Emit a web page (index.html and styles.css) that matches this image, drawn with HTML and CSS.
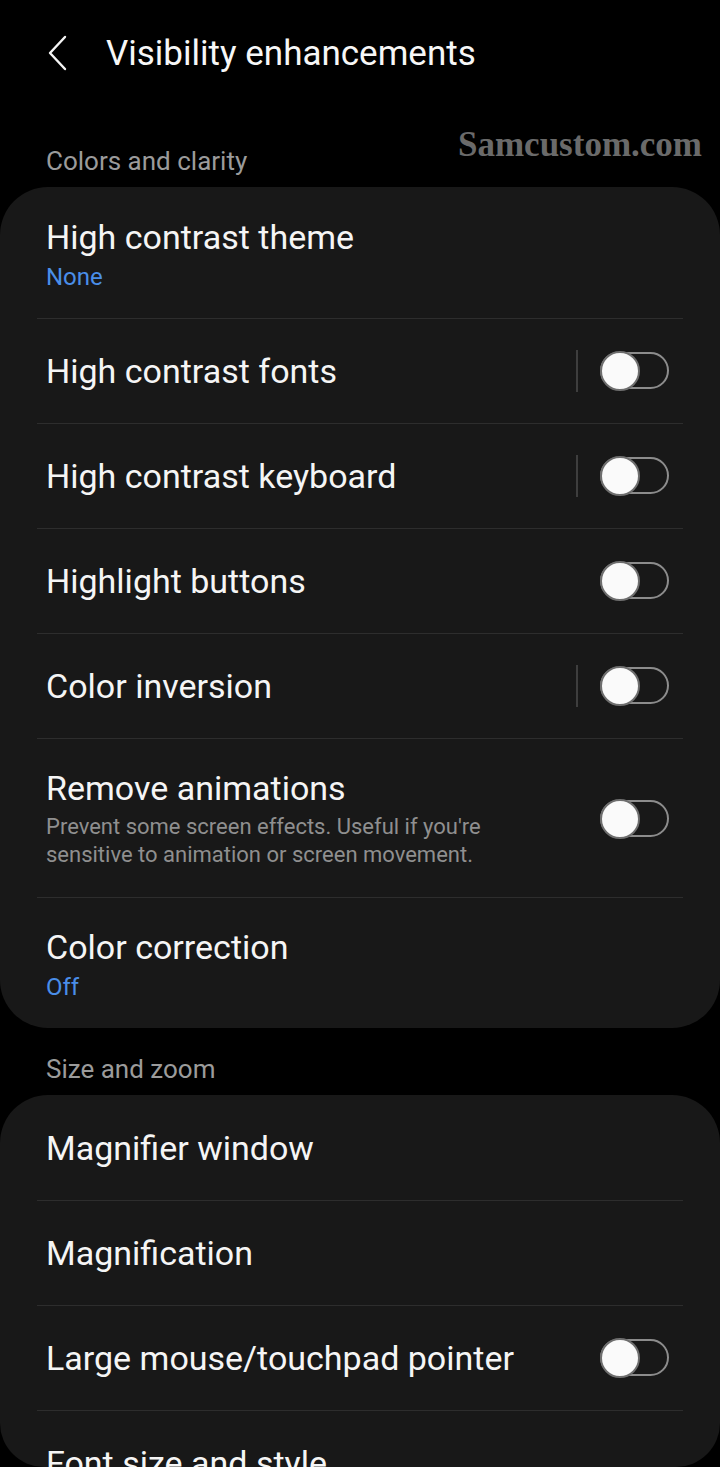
FILE: index.html
```html
<!DOCTYPE html>
<html lang="en">
<head>
  <meta charset="UTF-8">
  <meta name="viewport" content="width=device-width, initial-scale=1.0">
  <title>Visibility enhancements</title>
  <link rel="stylesheet" href="styles.css">
</head>
<body>

<div class="screen">
  <div class="watermark">Samcustom.com</div>

  <header class="appbar">
    <svg class="back" width="22" height="36" viewBox="0 0 22 36">
      <path d="M18 2 L3 18 L18 34" fill="none" stroke="#f5f5f5" stroke-width="2.4" stroke-linecap="round" stroke-linejoin="round"/>
    </svg>
    <h1>Visibility enhancements</h1>
  </header>

  <div class="section-title first">Colors and clarity</div>
  <div class="card">
    <div class="row two-line">
      <div class="text">
        <div class="title">High contrast theme</div>
        <div class="value">None</div>
      </div>
    </div>
    <div class="row">
      <div class="text"><div class="title">High contrast fonts</div></div>
      <div class="sep"></div>
      <div class="switch"><span class="thumb"></span></div>
    </div>
    <div class="row">
      <div class="text"><div class="title">High contrast keyboard</div></div>
      <div class="sep"></div>
      <div class="switch"><span class="thumb"></span></div>
    </div>
    <div class="row">
      <div class="text"><div class="title">Highlight buttons</div></div>
      <div class="switch"><span class="thumb"></span></div>
    </div>
    <div class="row">
      <div class="text"><div class="title">Color inversion</div></div>
      <div class="sep"></div>
      <div class="switch"><span class="thumb"></span></div>
    </div>
    <div class="row desc-row">
      <div class="text">
        <div class="title">Remove animations</div>
        <div class="desc">Prevent some screen effects. Useful if you're sensitive to animation or screen movement.</div>
      </div>
      <div class="switch"><span class="thumb"></span></div>
    </div>
    <div class="row two-line">
      <div class="text">
        <div class="title">Color correction</div>
        <div class="value">Off</div>
      </div>
    </div>
  </div>

  <div class="section-title">Size and zoom</div>
  <div class="card">
    <div class="row">
      <div class="text"><div class="title">Magnifier window</div></div>
    </div>
    <div class="row">
      <div class="text"><div class="title">Magnification</div></div>
    </div>
    <div class="row">
      <div class="text"><div class="title">Large mouse/touchpad pointer</div></div>
      <div class="switch"><span class="thumb"></span></div>
    </div>
    <div class="row">
      <div class="text"><div class="title">Font size and style</div></div>
    </div>
  </div>
</div>

</body>
</html>
```

FILE: styles.css
```css
body {
  margin: 0;
  background-color: #000;
  font-family: Roboto, "Noto Sans", sans-serif;
  color: #f5f5f5;
}

.screen {
  position: relative;
  width: 720px;
  height: 1467px;
  overflow: hidden;
  border-radius: 0 0 44px 44px;
  background-color: #000;
}

.watermark {
  position: absolute;
  top: 125px;
  right: 18px;
  font-family: "Liberation Serif", serif;
  font-weight: bold;
  font-size: 35px;
  color: #6a6a6a;
}

.appbar {
  height: 106px;
  display: flex;
  align-items: center;
  padding-left: 47px;
}

.appbar .back {
  margin-right: 37px;
}

.appbar h1 {
  margin: 0;
  font-size: 35px;
  font-weight: 400;
  color: #f7f7f7;
}

.section-title {
  padding: 26px 46px 11px;
  font-size: 26px;
  line-height: 30px;
  color: #9b9b9b;
}

.section-title.first {
  padding-top: 40px;
}

.card {
  background-color: #181818;
  border-radius: 48px;
}

.row {
  position: relative;
  display: flex;
  align-items: center;
  min-height: 105px;
  padding: 0 51px 0 46px;
  box-sizing: border-box;
}

.row + .row::before {
  content: "";
  position: absolute;
  top: 0;
  left: 37px;
  right: 37px;
  height: 1px;
  background-color: #2d2d2d;
}

.row.two-line {
  min-height: 131px;
  padding-top: 30px;
  padding-bottom: 21px;
}

.row.desc-row {
  min-height: 159px;
  padding-top: 30px;
  padding-bottom: 28px;
}

.text {
  flex: 1;
}

.title {
  font-size: 34px;
  line-height: 40px;
  color: #f5f5f5;
}

.value {
  font-size: 24px;
  line-height: 40px;
  color: #4a8ee8;
}

.desc {
  max-width: 490px;
  margin-top: 5px;
  font-size: 22px;
  line-height: 28px;
  color: #8f8f8f;
}

.sep {
  width: 2px;
  height: 42px;
  background-color: #3e3e3e;
  margin-right: 22px;
}

.switch {
  display: flex;
  align-items: center;
  width: 69px;
  height: 37px;
  border: 2px solid #8c8c8c;
  border-radius: 20px;
  box-sizing: border-box;
}

.thumb {
  width: 40px;
  height: 40px;
  margin-left: -2px;
  border: 2px solid #6e6e6e;
  border-radius: 50%;
  background-color: #fafafa;
  box-sizing: border-box;
}
```
